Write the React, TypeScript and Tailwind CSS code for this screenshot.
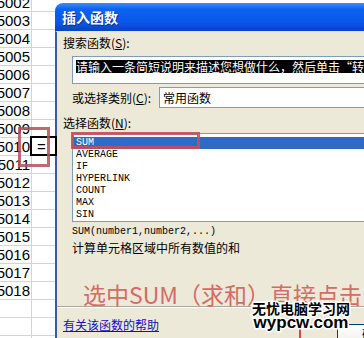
import React from 'react'

const cjk = "font-['Noto_Sans_CJK_SC','Noto_Sans',sans-serif]"
const mono = "font-['Liberation_Mono','Noto_Sans_CJK_SC',monospace]"

const rows: string[] = []
for (let n = 5002; n <= 5018; n++) rows.push(String(n))
rows.push('', '', '')

const funcs = ['SUM', 'AVERAGE', 'IF', 'HYPERLINK', 'COUNT', 'MAX', 'SIN']

function Sheet() {
  return (
    <div className="w-[55px] shrink-0 -mt-[6px] bg-white">
      {rows.map((r, i) => (
        <div key={i} className="flex h-[18px] border-b border-[#d4d4d4]">
          <div className="w-[32px] shrink-0 border-r border-[#d4d4d4] flex items-end justify-end pr-[1px] overflow-hidden">
            <span className="font-['Liberation_Sans',sans-serif] text-[15px] leading-[16px] text-black">{r}</span>
          </div>
          <div className="flex-1 relative">
            {r === '5010' && (
              <div className="absolute -inset-x-[2px] -top-[2px] -bottom-[1px] border-2 border-black flex items-center pl-[5px]">
                <span className="font-['Liberation_Sans',sans-serif] text-[15px] leading-none text-black">=</span>
              </div>
            )}
          </div>
        </div>
      ))}
    </div>
  )
}

function Dialog() {
  return (
    <div className={`flex-1 mt-[3px] flex flex-col min-h-0 ${cjk}`}>
      <div className="h-[28px] shrink-0 rounded-tl-[8px] bg-[linear-gradient(180deg,#3f8cf7_0%,#0d62f2_22%,#0857e8_70%,#0743c2_100%)] flex items-center pl-[7px]">
        <span className="text-white font-bold text-[14px] leading-none [text-shadow:1px_1px_0_#0a2f8a]">插入函数</span>
      </div>
      <div className="shrink-0 bg-[#ECE9D8] border-l-[2px] border-[#3a5aa8] border-t border-t-[#dfe3ee] pb-[20px]">
        <div className="pl-[6px] pt-[4px] text-[12px] text-black">
          <div className="leading-[14px]">搜索函数(<u>S</u>):</div>
          <div className="ml-[9px] mt-[6px] h-[28px] bg-white border border-[#7f9db9] pt-[1px] pl-[3px] whitespace-nowrap overflow-hidden">
            <span className="bg-black text-white leading-[13px] inline-block">请输入一条简短说明来描述您想做什么，然后单击“转到”</span>
          </div>
          <div className="flex items-center mt-[3px] h-[21px]">
            <span className="ml-[9px] w-[87px] leading-[14px]">或选择类别(<u>C</u>):</span>
            <div className="flex-1 h-[21px] bg-white border border-[#7f9db9] flex items-center pl-[3px]">常用函数</div>
          </div>
          <div className="mt-[8px] leading-[14px]">选择函数(<u>N</u>):</div>
          <div className={`ml-[9px] mt-[3px] h-[89px] bg-white border border-[#7f9db9] pt-[3px] ${mono} text-[10px]`}>
            {funcs.map((f, i) => (
              <div
                key={f}
                className={`h-[12px] leading-[12px] pl-[3px] ${i === 0 ? 'bg-[#316ac5] text-white' : 'text-black'}`}
              >
                {f}
              </div>
            ))}
          </div>
          <div className={`ml-[9px] mt-[4px] leading-[12px] text-[10px] ${mono}`}>SUM(number1,number2,...)</div>
          <div className="ml-[9px] mt-[3px] leading-[14px]">计算单元格区域中所有数值的和</div>
          <div className="ml-[20px] mt-[27px] h-[24px] text-[23px] leading-[24px] text-[#d66a64] whitespace-nowrap">选中SUM（求和）直接点击</div>
        </div>
        <div className="border-t border-[#aca899] border-b border-b-white" />
        <div className="flex justify-between pl-[6px] pt-[10px]">
          <span className="text-[12px] leading-[14px] text-[#1010c0] underline">有关该函数的帮助</span>
          <div className="mt-[6px] w-[52px] h-[24px] rounded-[3px] border border-[#003c74] bg-[linear-gradient(180deg,#ffffff,#ecebe6)] pl-[24px] pt-[2px] text-[12px] leading-[14px]">确定</div>
        </div>
      </div>
    </div>
  )
}

export default function App() {
  return (
    <div className="relative w-[364px] h-[338px] overflow-hidden flex items-start bg-white">
      <Sheet />
      <Dialog />

      {/* red annotation boxes */}
      <div className="absolute left-[18px] top-[127px] w-[32px] h-[40px] border-[3px] border-[#b4505a]/85" />
      <div className="absolute left-[71px] top-[132px] w-[129px] h-[17px] border-[3px] border-[#c24f5b]/90" />
      <div className="absolute left-[299px] top-[320px] w-[2px] h-[18px] bg-[#d04a4a]" />

      {/* watermark */}
      <div className="absolute left-[252px] top-[301px] flex flex-col items-center leading-none text-black font-bold [paint-order:stroke_fill] [-webkit-text-stroke:3px_#fff]">
        <span className={`${cjk} text-[14px]`}>无忧电脑学习网</span>
        <span className="font-['Liberation_Sans',sans-serif] text-[17px] -mt-[1px]">wypcw.com</span>
      </div>
    </div>
  )
}
